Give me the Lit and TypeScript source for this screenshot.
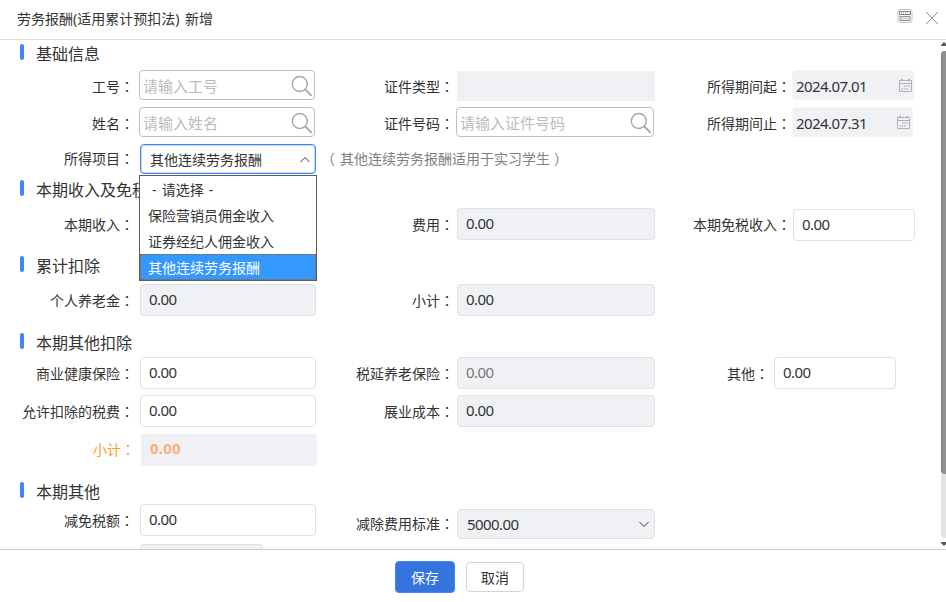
import { LitElement, html, css, svg, nothing } from "lit";
import { customElement, property } from "lit/decorators.js";
import { classMap } from "lit/directives/class-map.js";

const fontStack = css`"Noto Sans", "Noto Sans CJK SC", sans-serif`;

const searchIcon = html`<svg class="icon" width="24" height="24" viewBox="0 0 24 24" fill="none" stroke="#a6a6a6">
  <circle cx="10.8" cy="11" r="7.5" stroke-width="1.4" />
  <path d="M16.2 16.4L22.6 22.8" stroke-width="1.9" />
</svg>`;

const calendarIcon = html`<svg class="icon" width="13" height="13" viewBox="0 0 13 13" fill="none" stroke="#b0b0b0">
  <path d="M.5 1.5h12v11H.5zM.5 4.5h12" />
  <path d="M2 .5h2M9 .5h2" />
  <path d="M5 7h1.6M7.3 7h1.6M9.6 7h1.6M2.4 10h1.6M4.8 10h1.6M7.2 10h1.6" stroke-width="1.6" stroke="#bdbdbd" />
</svg>`;

const chevron = (up: boolean) => html`<svg class="icon" width="12" height="8" viewBox="0 0 12 8" fill="none" stroke="#333">
  ${up ? svg`<path d="M1.5 7L6 2.5l4.5 4.5" />` : svg`<path d="M1.5 2L6 6.5l4.5-4.5" />`}
</svg>`;

@customElement("form-field")
class FormField extends LitElement {
  @property() label = "";
  @property() value = "";
  @property() placeholder = "";
  @property() kind = "input";
  @property({ type: Array }) options: string[] = [];

  static styles = css`
    :host {
      display: flex;
      align-items: flex-start;
      height: 30px;
      font: 14px/30px ${fontStack};
      color: #333;
    }
    .label {
      width: var(--label-width, 134px);
      margin-top: var(--label-shift, 1px);
      text-align: right;
      white-space: nowrap;
      flex: none;
    }
    .colon {
      font-family: "Noto Sans CJK TC", sans-serif;
      line-height: 1;
    }
    .control {
      position: relative;
      display: flex;
      align-items: center;
      justify-content: space-between;
      box-sizing: border-box;
      flex: none;
      width: var(--control-width, 176px);
      height: var(--control-height, 32px);
      margin-left: var(--control-gap, 6px);
      margin-top: var(--control-shift, 0px);
      padding: 0 8px;
      border: 1px solid #dfe0e4;
      border-radius: 4px;
      background: #fff;
    }
    .value {
      line-height: 20px;
      white-space: nowrap;
      font-size: 15px;
      letter-spacing: -0.57px;
      padding-bottom: 2px;
    }
    .icon {
      flex: none;
      display: block;
    }
    .search {
      height: 30px;
      padding: 0 1px 0 3px;
      border-color: #bfbfbf;
    }
    .search .value {
      letter-spacing: 0;
      color: #bbb;
      padding: 2px 0 0;
    }
    .date {
      height: 30px;
      padding: 0 2px 0 3px;
      background: #f0f1f5;
      border-color: #f4f5f8;
    }
    .date .value {
      padding: 1px 0 0;
    }
    .blank,
    .total {
      background: #f0f1f5;
      border-color: #f0f1f5;
      border-radius: 0;
    }
    .blank {
      height: 30px;
    }
    .total .value {
      font-weight: 700;
      color: #f9b07a;
      letter-spacing: 0.2px;
      padding-bottom: 4px;
    }
    .total-label {
      color: #ff9c1a;
    }
    .readonly,
    .muted {
      background: #f0f1f5;
    }
    .muted .value {
      color: #777;
    }
    .select {
      height: 30px;
      padding: 0 4px 0 9px;
      background: #f0f1f5;
    }
    .select .value {
      padding-bottom: 0;
    }
    .open {
      background: #fff;
      border-color: #3b82f6;
      box-shadow: inset 0 0 0 1px rgba(59, 130, 246, 0.3);
    }
    .open .value {
      font-size: 14px;
      letter-spacing: 0;
      padding-top: 2px;
    }
    .menu {
      position: absolute;
      z-index: 2;
      top: 30px;
      left: -2px;
      width: 176px;
      border: 1px solid #5c5c5c;
      background: #fff;
    }
    .option {
      box-sizing: border-box;
      height: 26px;
      padding-left: 8px;
      line-height: 27px;
    }
    .option.first {
      padding-left: 12px;
      word-spacing: 1.5px;
    }
    .option.selected {
      padding-left: 7px;
      line-height: 25px;
      border: 1px dotted #a35b12;
      background: #3399ff;
      color: #fff;
    }
  `;

  render() {
    const open = this.options.length > 0;
    const kind = this.kind;
    return html`
      <div class=${classMap({ label: true, "total-label": kind === "total" })}>
        ${this.label ? html`${this.label}<span class="colon">：</span>` : nothing}
      </div>
      <div class=${classMap({ control: true, [kind]: true, open })}>
        <span class="value">${this.value || this.placeholder}</span>
        ${kind === "search" ? searchIcon : nothing}
        ${kind === "date" ? calendarIcon : nothing}
        ${kind === "select" ? chevron(open) : nothing}
        ${open
          ? html`<div class="menu">
              ${this.options.map(
                (o, i) => html`<div
                  class=${classMap({ option: true, first: i === 0, selected: o === this.value })}
                >${o}</div>`
              )}
            </div>`
          : nothing}
      </div>
    `;
  }
}

const incomeItems = ["- 请选择 -", "保险营销员佣金收入", "证券经纪人佣金收入", "其他连续劳务报酬"];

@customElement("app-root")
class AppRoot extends LitElement {
  static styles = css`
    :host {
      display: flex;
      flex-direction: column;
      height: 602px;
      overflow: hidden;
      background: #fff;
      color: #333;
      font: 14px/20px ${fontStack};
    }
    .header {
      box-sizing: border-box;
      flex: none;
      height: 40px;
      padding: 0 7px 3px 17px;
      border-bottom: 1px solid #dedede;
      display: flex;
      align-items: center;
      justify-content: space-between;
    }
    .title {
      padding-top: 2px;
      word-spacing: 2px;
    }
    .tools {
      display: flex;
      gap: 12px;
      align-items: center;
    }
    .history {
      margin-bottom: 4px;
    }
    .body {
      flex: none;
      height: 509px;
      display: flex;
      overflow: hidden;
      border-bottom: 1px solid #cdced0;
    }
    .form {
      width: 941px;
      flex: none;
    }
    .section {
      display: flex;
      height: 16px;
      gap: 12px;
      font-size: 16px;
      line-height: 16px;
      padding-left: 20px;
      white-space: nowrap;
    }
    .section::before {
      content: "";
      width: 4px;
      height: 16px;
      border-radius: 2px;
      background: #3f86f8;
    }
    .section span {
      padding-top: 2px;
    }
    .row {
      display: grid;
      grid-template-columns: 317px 338px 286px;
      height: 32px;
    }
    .short {
      height: 30px;
    }
    .c2 {
      grid-column: 2;
      --label-width: 137px;
      --control-gap: 3px;
      --control-width: 198px;
    }
    .c3 {
      grid-column: 3;
      --label-width: 136px;
      --control-gap: 2px;
      --control-width: 122px;
    }
    .sec1 { margin-top: 4px; }
    .row1 { margin-top: 10px; --label-shift: 2px; }
    .row1 form-field:first-child { --control-gap: 5px; }
    .row1 .c2 { --control-shift: 1px; }
    .row1 .c3 { --control-width: 123px; --control-gap: 1px; }
    .row2 { margin-top: 7px; --label-shift: 2px; }
    .row2 form-field:first-child { --control-gap: 5px; }
    .row2 .c2 { --control-gap: 2px; }
    .row2 .c3 { --control-width: 121px; --control-gap: 1px; }
    .row3 { margin-top: 7px; --label-shift: 0px; }
    .hint {
      grid-column: 2 / 4;
      padding-left: 9px;
      line-height: 30px;
      color: #808080;
    }
    .paren { font-family: "Noto Sans CJK TC", sans-serif; line-height: 1; }
    .paren:first-child { margin: 0 5px 0 -5px; }
    .paren:last-child { margin-left: 4px; }
    .sec2 { margin-top: 6px; }
    .row4 { margin-top: 12px; --label-shift: 2px; }
    .row4 .c3 { --control-shift: 1px; }
    .sec3 { margin-top: 16px; }
    .row5 { margin-top: 12px; --label-shift: 2px; }
    .sec4 { margin-top: 17px; }
    .row6 { margin-top: 8px; --label-shift: 2px; }
    .row6 .c3 { --label-width: 114px; --control-gap: 5px; }
    .row7 { margin-top: 6px; --label-shift: 2px; }
    .row8 { margin-top: 7px; --label-shift: 1px; --label-width: 135px; }
    .sec5 { margin-top: 16px; }
    .row9 { margin-top: 6px; --label-shift: 2px; }
    .row9 .c2 { --control-shift: 5px; --label-shift: 5px; }
    .row10 { margin-top: 8px; --control-width: 123px; }
    .scroll {
      width: 5px;
      display: flex;
      flex-direction: column;
      overflow: hidden;
    }
    .arrow { display: block; flex: none; margin-left: -1px; }
    .up { margin-top: 2px; }
    .track {
      margin-top: 5px;
      height: 487px;
      flex: none;
      border-radius: 4px 0 0 4px;
      background: #e4e4e4;
    }
    .thumb {
      box-sizing: border-box;
      height: 423px;
      border-radius: 4px 0 0 4px;
      background: #8f9091;
      border-left: 1px solid #7e7f80;
    }
    .down { margin-top: 4px; }
    .footer {
      flex: 1;
      display: flex;
      justify-content: center;
      align-items: flex-start;
      gap: 11px;
      padding: 11px 27px 0 0;
    }
    .btn {
      box-sizing: border-box;
      font: inherit;
      padding: 1px 0 0;
      border-radius: 4px;
      text-align: center;
    }
    .save {
      width: 60px;
      height: 32px;
      color: #fff;
      background: #3574dd;
      border: 1px solid #3f86f8;
    }
    .cancel {
      width: 58px;
      height: 30px;
      margin-top: 1px;
      color: #333;
      background: #fff;
      border: 1px solid #d3d4d8;
    }
  `;

  render() {
    return html`
      <div class="header">
        <span class="title">劳务报酬(适用累计预扣法) 新增</span>
        <span class="tools">
          <svg class="history" width="16" height="14" viewBox="0 0 16 14" fill="none">
            <rect x="1" y=".5" width="14" height="13" rx="2" stroke="#c4c4c4" />
            <rect x="2.5" y="2.5" width="11" height="3" stroke="#8a8a8a" />
            <path d="M4 4h8.5" stroke="#8a8a8a" stroke-dasharray="1 1" />
            <rect x="3" y="7.5" width="10" height="4" fill="#dcdcdc" stroke="#999" />
          </svg>
          <svg width="14" height="14" viewBox="0 0 14 14" fill="none" stroke="#8c8c8c">
            <path d="M1 1l12 12M13 1L1 13" />
          </svg>
        </span>
      </div>
      <div class="body">
        <div class="form">
          <div class="section sec1"><span>基础信息</span></div>
          <div class="row short row1">
            <form-field label="工号" kind="search" placeholder="请输入工号"></form-field>
            <form-field class="c2" label="证件类型" kind="blank"></form-field>
            <form-field class="c3" label="所得期间起" kind="date" value="2024.07.01"></form-field>
          </div>
          <div class="row short row2">
            <form-field label="姓名" kind="search" placeholder="请输入姓名"></form-field>
            <form-field class="c2" label="证件号码" kind="search" placeholder="请输入证件号码"></form-field>
            <form-field class="c3" label="所得期间止" kind="date" value="2024.07.31"></form-field>
          </div>
          <div class="row short row3">
            <form-field label="所得项目" kind="select" value="其他连续劳务报酬" .options=${incomeItems}></form-field>
            <div class="hint"><span class="paren">（</span>其他连续劳务报酬适用于实习学生<span class="paren">）</span></div>
          </div>
          <div class="section sec2"><span>本期收入及免税</span></div>
          <div class="row row4">
            <form-field label="本期收入"></form-field>
            <form-field class="c2" label="费用" kind="readonly" value="0.00"></form-field>
            <form-field class="c3" label="本期免税收入" value="0.00"></form-field>
          </div>
          <div class="section sec3"><span>累计扣除</span></div>
          <div class="row row5">
            <form-field label="个人养老金" kind="readonly" value="0.00"></form-field>
            <form-field class="c2" label="小计" kind="readonly" value="0.00"></form-field>
          </div>
          <div class="section sec4"><span>本期其他扣除</span></div>
          <div class="row row6">
            <form-field label="商业健康保险" value="0.00"></form-field>
            <form-field class="c2" label="税延养老保险" kind="muted" value="0.00"></form-field>
            <form-field class="c3" label="其他" value="0.00"></form-field>
          </div>
          <div class="row row7">
            <form-field label="允许扣除的税费" value="0.00"></form-field>
            <form-field class="c2" label="展业成本" kind="readonly" value="0.00"></form-field>
          </div>
          <div class="row row8">
            <form-field label="小计" kind="total" value="0.00"></form-field>
          </div>
          <div class="section sec5"><span>本期其他</span></div>
          <div class="row row9">
            <form-field label="减免税额" value="0.00"></form-field>
            <form-field class="c2" label="减除费用标准" kind="select" value="5000.00"></form-field>
          </div>
          <div class="row row10">
            <form-field kind="readonly"></form-field>
          </div>
        </div>
        <div class="scroll">
          <svg class="arrow up" width="8" height="4" viewBox="0 0 8 4"><path d="M0 4L4 0l4 4z" fill="#555" /></svg>
          <div class="track"><div class="thumb"></div></div>
          <svg class="arrow down" width="8" height="4" viewBox="0 0 8 4"><path d="M0 0h8L4 4z" fill="#555" /></svg>
        </div>
      </div>
      <div class="footer">
        <button class="btn save">保存</button>
        <button class="btn cancel">取消</button>
      </div>
    `;
  }
}
